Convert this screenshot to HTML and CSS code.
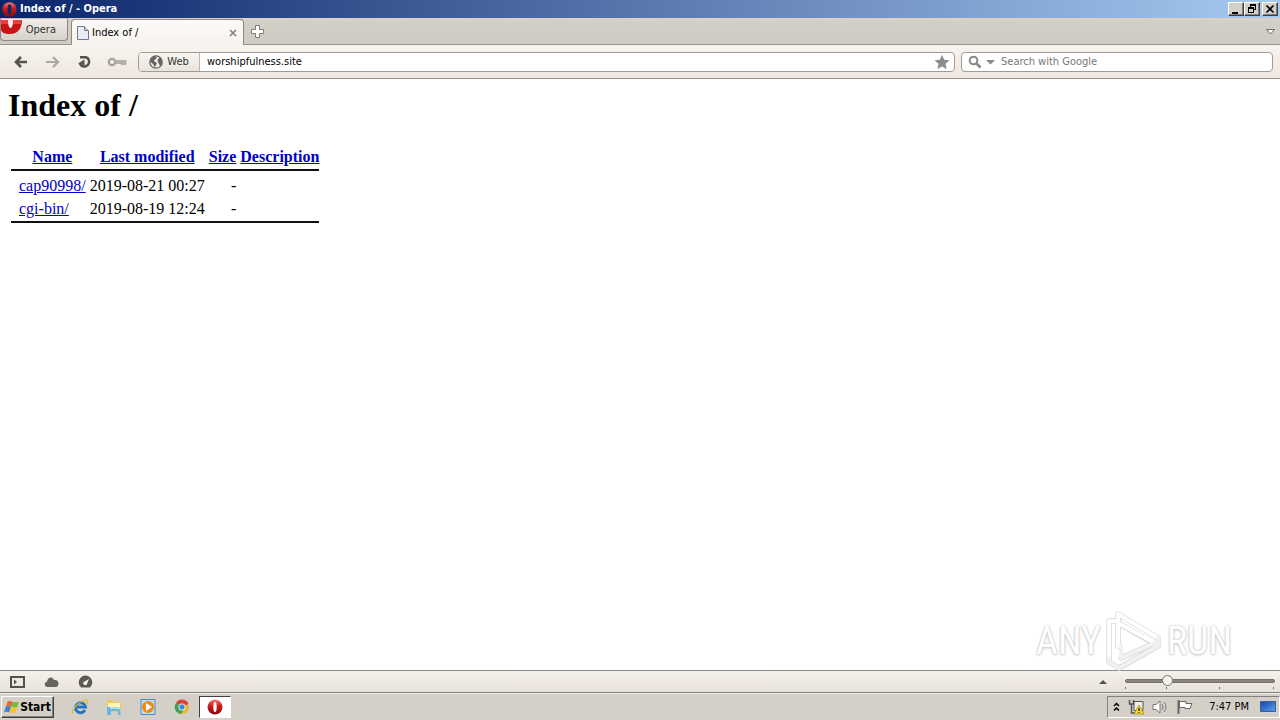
FILE: index.html
```html
<!DOCTYPE html>
<html lang="en">
<head>
<meta charset="utf-8">
<title>Index of / - Opera</title>
<link rel="stylesheet" href="styles.css">
</head>
<body>
<svg width="0" height="0" class="defs" aria-hidden="true">
  <defs>
    <linearGradient id="red" x1="0" y1="0" x2="0" y2="1"><stop offset="0" stop-color="#f08078"/><stop offset=".4" stop-color="#cf1f1f"/><stop offset="1" stop-color="#8c0808"/></linearGradient>
    <linearGradient id="screen" x1="0" y1="0" x2="1" y2="1"><stop offset="0" stop-color="#1546b0"/><stop offset="1" stop-color="#5aa0ee"/></linearGradient>
  </defs>
</svg>

<header class="titlebar">
  <svg class="app-icon" viewBox="0 0 16 16"><ellipse cx="8" cy="8" rx="7.500" ry="7.800" fill="url(#red)"/><ellipse cx="8" cy="8" rx="2" ry="5.500" fill="#0b2a6c"/></svg>
  <span class="window-title">Index of / - Opera</span>
  <div class="window-buttons">
    <button class="win-btn" aria-label="Minimize"><svg viewBox="0 0 14 12"><path d="M3 9h6v2H3z"/></svg></button>
    <button class="win-btn" aria-label="Restore"><svg viewBox="0 0 14 12"><path d="M5 1h6v6H9V6h1V3H6v1H5zM3 4h6v6H3zm1 2v3h4V6z" fill-rule="evenodd"/></svg></button>
    <button class="win-btn close" aria-label="Close"><svg viewBox="0 0 14 12"><path d="M3.500 2.500l7 7m0-7l-7 7" stroke="#000" stroke-width="1.700"/></svg></button>
  </div>
</header>

<nav class="tabbar">
  <button class="opera-menu"><svg viewBox="0 0 22 18"><path d="M0 1h21c0 8-4 14-12 14-5 0-8-1-9-4z" fill="#c81414"/><path d="M0 1h21l-1 4H0z" fill="#dd453e"/><path d="M7 1h5c0 5-1 8-2.500 8S7 6 7 1z" fill="#f4efea"/></svg>Opera</button>
  <div class="tab">
    <svg class="page-icon" viewBox="0 0 12 14"><path d="M.5.5h7l4 4v9H.500z" fill="#e9ecf6" stroke="#74798c"/><path d="M7.500.5v4h4" fill="#cdd1df" stroke="#74798c"/></svg>
    <span>Index of /</span>
    <button class="tab-close" aria-label="Close tab"><svg viewBox="0 0 8 8"><path d="M1 1l6 6m0-6L1 7" stroke="#85807a" stroke-width="1.700"/></svg></button>
  </div>
  <button class="new-tab" aria-label="New tab"><svg viewBox="0 0 13 13"><path d="M4.500.5h4v4h4v4h-4v4h-4v-4h-4v-4h4z" fill="#fff" stroke="#817c76"/></svg></button>
  <button class="tab-list" aria-label="Closed tabs"><svg viewBox="0 0 9 6"><path d="M.5.500h8l-4 4.500z" fill="#fff" stroke="#6c6862"/></svg></button>
</nav>

<div class="toolbar">
  <button class="tool" aria-label="Back"><svg viewBox="0 0 16 14"><path d="M14 7H3M8 2L3 7l5 5" fill="none" stroke="#55514d" stroke-width="2.600"/></svg></button>
  <button class="tool" aria-label="Forward"><svg viewBox="0 0 16 14"><path d="M1 7h12M8 2l5 5-5 5" fill="none" stroke="#aaa6a1" stroke-width="2.200"/></svg></button>
  <button class="tool" aria-label="Reload"><svg viewBox="0 0 16 14"><path d="M3 2.200h6a4.800 4.800 0 1 1-6 6.500" fill="none" stroke="#55514d" stroke-width="2.500"/><path d="M1 8.500L7.500 4.500V10.500z" fill="#55514d"/></svg></button>
  <button class="tool wide" aria-label="Password manager"><svg viewBox="0 0 20 14"><circle cx="5" cy="7" r="3.200" fill="none" stroke="#a5a19c" stroke-width="2.200"/><path d="M8 5.500h11v4h-2V9h-1v.5h-2V8.500H8z" fill="#b5b1ac" stroke="#a09c97" stroke-width=".6"/></svg></button>
  <form class="address">
    <button type="button" class="badge"><svg viewBox="0 0 14 14"><circle cx="7" cy="7" r="6.200" fill="#f4f0eb" stroke="#65615d" stroke-width="1.300"/><path d="M2 4l3-2.500 3 .5-1 2-2 1 .5 1.500L8 8l-1 2-1 2.500L4 9 1.500 7zM9 4l2-1.500L13 6l-.5 3-1.500 2-1.500-3L8.500 6z" fill="#65615d"/></svg>Web</button>
    <input type="text" aria-label="Address" value="worshipfulness.site">
    <button type="button" class="star" aria-label="Bookmark"><svg viewBox="0 0 16 16"><path d="M8 .8l2.200 4.900 5.300.5-4 3.600 1.200 5.300L8 12.400l-4.700 2.700 1.200-5.300-4-3.600 5.300-.5z" fill="#8c8c8c"/></svg></button>
  </form>
  <form class="search">
    <button type="button" aria-label="Search engine"><svg viewBox="0 0 28 14"><circle cx="5.500" cy="5.500" r="3.800" fill="none" stroke="#888" stroke-width="2"/><path d="M8.500 8.500l4 4" stroke="#888" stroke-width="2.500"/><path d="M18 5h9l-4.500 4.500z" fill="#888"/></svg></button>
    <input type="text" aria-label="Search" placeholder="Search with Google">
  </form>
</div>

<main class="page">
  <h1>Index of /</h1>
  <table class="listing">
    <thead>
      <tr><th class="icon"></th><th><a href="#name">Name</a></th><th><a href="#modified">Last modified</a></th><th><a href="#size">Size</a></th><th><a href="#description">Description</a></th></tr>
      <tr class="rule"><td colspan="5"><hr></td></tr>
    </thead>
    <tbody>
      <tr><td></td><td><a href="#cap90998">cap90998/</a></td><td>2019-08-21 00:27</td><td class="size">-</td><td></td></tr>
      <tr><td></td><td><a href="#cgi-bin">cgi-bin/</a></td><td>2019-08-19 12:24</td><td class="size">-</td><td></td></tr>
      <tr class="rule"><td colspan="5"><hr></td></tr>
    </tbody>
  </table>
</main>

<div class="watermark">
  <span>ANY</span>
  <svg viewBox="0 0 60 62"><g fill="none" stroke-linejoin="round" stroke-linecap="round"><path d="M14 36V4l40 24v8L15 58 5 52V11h6M14 13l37 21M17 48l34-15" stroke="#d8d8d8" stroke-width="5.500"/><path d="M14 36V4l40 24M5 48V11h6M14 13l37 20" stroke="#fff" stroke-width="4"/><path d="M54 28v8L15 58 5 52v-4M51 33L17 48V36" stroke="#f1f1f1" stroke-width="4"/></g></svg>
  <span>RUN</span>
</div>

<footer class="statusbar">
  <button aria-label="Panels"><svg viewBox="0 0 15 14"><path d="M1 2h13v10H1z" fill="none" stroke="#55514d" stroke-width="2"/><path d="M4 4.500L7 7 4 9.500z" fill="#55514d"/></svg></button>
  <button aria-label="Opera Link"><svg viewBox="0 0 15 14"><path d="M3 12a2.800 2.800 0 0 1 0-5.500C4 1.500 9 1.500 10 5c3-.5 4.500 1.500 4.500 3.500S13 12 12 12z" fill="#66625e"/></svg></button>
  <button aria-label="Opera Turbo"><svg viewBox="0 0 15 14"><path d="M3 12.500a6.800 6.800 0 1 1 9 0z" fill="#5d5955"/><path d="M6 10l-1-2.500L11 4 8.500 10z" fill="#f4f0eb"/></svg></button>
  <button class="zoom-menu" aria-label="Zoom presets"><svg viewBox="0 0 8 5"><path d="M0 5l4-4 4 4z" fill="#55514d"/></svg></button>
  <div class="zoom">
    <input type="range" aria-label="Zoom" min="0" max="100" value="26">
    <div class="ticks"><i></i><i></i><i></i><i></i></div>
  </div>
</footer>

<div class="taskbar">
  <button class="start"><svg viewBox="0 0 18 16"><path d="M4 2c3-2 4 0 6 0L8 8C6 6 4 6 2 8z" fill="#e9672b"/><path d="M10 2c2 1 4 1 7 0l-2 6c-2 1-4 1-7 0z" fill="#78b943"/><path d="M2 8c2-2 4-1 6 0l-2 6c-2-1-4-1-6 0z" fill="#3d83d4"/><path d="M8 8c3 1 5 1 7 0l-2 6c-2 1-4 1-7 0z" fill="#f6c22d"/></svg>Start</button>
  <div class="launchers">
    <button aria-label="Internet Explorer"><svg viewBox="0 0 18 18"><path d="M14 12a5 5 0 1 1 .5-3H5" fill="none" stroke="#2176c6" stroke-width="3"/><path d="M2 16C-1 12 10 2 15 2c3 0 1 4 0 5" fill="none" stroke="#e9b52a" stroke-width="1.200"/></svg></button>
    <button aria-label="Explorer"><svg viewBox="0 0 18 18"><path d="M2 2h6l1 2h7v10H2z" fill="#eac95f"/><path d="M3 5h12v6H3z" fill="#fff3b5"/><path d="M5 9h9l2 8h-3v-4H6v4H2V9z" fill="#68b5e5"/><path d="M5 9h9v2H5z" fill="#b1dcf4"/></svg></button>
    <button aria-label="Media Player"><svg viewBox="0 0 18 18"><path d="M2 1.500h14v15H2z" fill="#b9ddf6" stroke="#4d8dc4"/><circle cx="9" cy="9" r="6" fill="#f28a17"/><path d="M7 5l6 4-6 4z" fill="#fff"/></svg></button>
    <button aria-label="Chrome"><svg viewBox="0 0 18 18"><circle cx="9" cy="9" r="7" fill="#e7b92c"/><path d="M9 9L3 5a7 7 0 0 1 12.500 1z" fill="#dc4338"/><path d="M9 9L3 5a7 7 0 0 0 5 11l3-5z" fill="#3ca257"/><circle cx="9" cy="9" r="3.500" fill="#fff"/><circle cx="9" cy="9" r="2.700" fill="#4285d8"/></svg></button>
    <button class="active" aria-label="Opera"><svg viewBox="0 0 16 16"><ellipse cx="8" cy="8" rx="7.500" ry="7.500" fill="url(#red)"/><ellipse cx="8" cy="8" rx="1.700" ry="5" fill="#fff"/></svg></button>
  </div>
  <div class="tray">
    <button class="more" aria-label="Show hidden icons"><svg viewBox="0 0 7 10"><path d="M1 4l2.500-2.500L6 4M1 8.500L3.500 6 6 8.500" fill="none" stroke="#000" stroke-width="1.500"/></svg></button>
    <svg viewBox="0 0 16 16"><path d="M6 2.500h9v9H6z" fill="#eee" stroke="#555"/><path d="M1.500 1v4h4V1M3.500 5v9H7" fill="none" stroke="#555" stroke-width="1.500"/><path d="M11 6l5 9H6z" fill="#f6da2d" stroke="#a68500" stroke-width=".7"/><path d="M11 9v3m0 1v1" stroke="#222" stroke-width="1.300"/></svg>
    <svg viewBox="0 0 16 16"><path d="M1 5.500h3L8 2v12l-4-3.500H1z" fill="#fff" stroke="#777"/><path d="M10 5q2 3 0 6M12 3q4 5 0 10" fill="none" stroke="#777"/></svg>
    <svg class="flag" viewBox="0 0 18 16"><path d="M2.500 1v14" stroke="#666" stroke-width="2"/><path d="M3.500 2.500H10v2h6l-2 5H9v-1H3.500z" fill="#fff" stroke="#666"/></svg>
    <time>7:47 PM</time>
    <svg class="desktop" viewBox="0 0 16 14"><path d="M.5 1.500h15v10H.500z" fill="url(#screen)" stroke="#365f94"/><path d="M2 12.500h12" stroke="#c4d8ee"/></svg>
  </div>
</div>
</body>
</html>
```

FILE: styles.css
```css
* { box-sizing: border-box; }
body {
  margin: 0;
  min-height: 100vh;
  display: flex;
  flex-direction: column;
  position: relative;
  background: #fff;
  color: #000;
  font: 11px/14px Tahoma, "DejaVu Sans Condensed", "DejaVu Sans", sans-serif;
}
.defs { position: absolute; }
svg { display: block; flex: none; }
button { margin: 0; padding: 0; border: 0; background: none; color: inherit; font: inherit; display: flex; align-items: center; justify-content: center; }
input { min-width: 0; margin: 0; padding: 0; border: 0; outline: 0; background: none; font: inherit; }

.titlebar { display: flex; align-items: center; height: 18px; padding: 0 2px; background: linear-gradient(90deg, #0a246a, #a6caf0); color: #fff; }
.app-icon { width: 15px; height: 15px; margin-right: 3px; }
.window-title { flex: 1; font-weight: bold; }
.window-buttons { display: flex; }
.win-btn { width: 16px; height: 14px; background: #d4d0c8; border: 1px solid; border-color: #fff #404040 #404040 #fff; box-shadow: inset -1px -1px #808080; }
.win-btn svg { width: 14px; height: 12px; }
.close { margin-left: 2px; }

.tabbar { display: flex; align-items: flex-start; height: 27px; background: linear-gradient(#dcd1c8, #d2cdc5 6px, #d0cbc3); border-bottom: 1px solid #98928c; }
.opera-menu { width: 68px; height: 23px; padding-right: 11px; justify-content: space-between; background: linear-gradient(#f0ece7, #d6d1cb); border: 1px solid #8d8780; border-top-color: #c5beb6; border-radius: 0 0 4px 4px; color: #333; }
.opera-menu svg { width: 22px; height: 18px; align-self: flex-start; }
.tab { display: flex; align-items: center; width: 173px; height: 27px; margin: 1px 0 0 3px; padding: 0 6px 0 5px; background: linear-gradient(#fcfaf8, #f6f3ee); border: 1px solid #8e8881; border-bottom: 0; border-radius: 4px 4px 0 0; }
.tab span { flex: 1; }
.page-icon { width: 12px; height: 14px; margin-right: 3px; }
.tab-close svg { width: 8px; height: 8px; }
.new-tab { margin: 7px 0 0 7px; }
.new-tab svg { width: 13px; height: 13px; }
.tab-list { margin: 11px 5px 0 auto; }
.tab-list svg { width: 9px; height: 6px; }

.toolbar { display: flex; align-items: center; height: 34px; padding: 0 7px 0 5px; background: linear-gradient(#f7f4ef, #eee7e0); border-bottom: 1px solid #9b918b; }
.tool { width: 32px; height: 24px; }
.tool svg { width: 16px; height: 14px; }
.tool.wide svg { width: 20px; }
.address, .search { display: flex; align-items: center; height: 20px; background: #fff; border: 1px solid #a19b95; border-radius: 4px; overflow: hidden; }
.address { flex: 1; margin-left: 5px; padding-right: 4px; }
.address input { flex: 1; padding-left: 7px; }
.badge { width: 61px; height: 18px; gap: 4px; background: linear-gradient(#f8f5f1, #e9e3dc); border-right: 1px solid #bbb5ae; color: #333; }
.badge svg { width: 14px; height: 14px; }
.star svg { width: 16px; height: 16px; }
.search { width: 312px; margin-left: 6px; padding-left: 6px; }
.search svg { width: 28px; height: 14px; }
.search input { flex: 1; padding-left: 5px; }
.search input::placeholder { color: #777; opacity: 1; }

.page { flex: 1; padding: 8px; font: 16px/19px "Liberation Serif", "Times New Roman", serif; }
h1 { margin: 0 0 20px; font-size: 32px; line-height: 37px; }
.listing { border-spacing: 2px; }
.listing th, .listing td { padding: 1px; white-space: nowrap; }
.listing .icon { width: 6px; }
.listing .size { text-align: right; }
.listing a { color: #0000cc; }
.listing .rule td { padding: 0 1px 2px; }
hr { height: 2px; margin: 0; border: 0; background: #111; }

.watermark { position: absolute; right: 48px; bottom: 48px; display: flex; align-items: center; gap: 3px; color: #fff; font: 38px/62px "Liberation Sans Narrow", "Roboto Condensed", Roboto, sans-serif; text-shadow: 0 0 2px #bbb, 0 1px 3px #ccc; }
.watermark svg { width: 60px; height: 62px; }

.statusbar { display: flex; align-items: center; height: 22px; padding: 0 5px 0 0; background: linear-gradient(#f4f0eb, #e9e2db); border-top: 1px solid #918b86; }
.statusbar button { width: 34px; height: 20px; }
.statusbar button svg { width: 15px; height: 14px; }
.statusbar .zoom-menu { width: 8px; margin-left: auto; }
.statusbar .zoom-menu svg { width: 8px; height: 5px; }
.zoom { width: 150px; margin-left: 18px; padding-top: 1px; }
.zoom input { display: block; width: 100%; height: 12px; appearance: none; }
.zoom input::-webkit-slider-runnable-track { height: 4px; background: #8c8580; border: 1px solid #77716c; border-radius: 2px; }
.zoom input::-webkit-slider-thumb { appearance: none; width: 11px; height: 11px; margin-top: -5px; background: #f5f3ef; border: 1px solid #77716c; border-radius: 50%; }
.ticks { display: grid; grid-template-columns: 41px 53px 54px 1px; }
.ticks i { width: 1px; height: 2px; background: #77716c; }

.taskbar { display: flex; align-items: center; height: 28px; padding: 2px 0 2px 1px; background: #d4d0c8; border-top: 1px solid #817d78; box-shadow: inset 0 1px #f2f0ec; }
.start { width: 53px; height: 22px; border: 1px solid; border-color: #fff #404040 #404040 #fff; box-shadow: inset -1px -1px #808080; font-size: 12px; font-weight: bold; }
.start svg { width: 16px; height: 16px; }
.launchers { display: flex; align-items: center; margin-left: 9px; }
.launchers button { width: 34px; height: 22px; }
.launchers svg { width: 18px; height: 18px; }
.launchers .active { width: 32px; background: #fff; border: 1px solid; border-color: #404040 #fff #fff #404040; }
.launchers .active svg { width: 16px; height: 16px; }
.tray { display: flex; align-items: center; height: 22px; margin-left: auto; padding: 0 3px 0 5px; border: 1px solid; border-color: #808080 #fff #fff #808080; gap: 8px; }
.tray svg { width: 16px; height: 16px; }
.tray .more svg { width: 7px; height: 10px; }
.tray .flag { width: 18px; }
.tray time { margin: 0 3px 0 7px; }
.tray .desktop { height: 14px; }
```
